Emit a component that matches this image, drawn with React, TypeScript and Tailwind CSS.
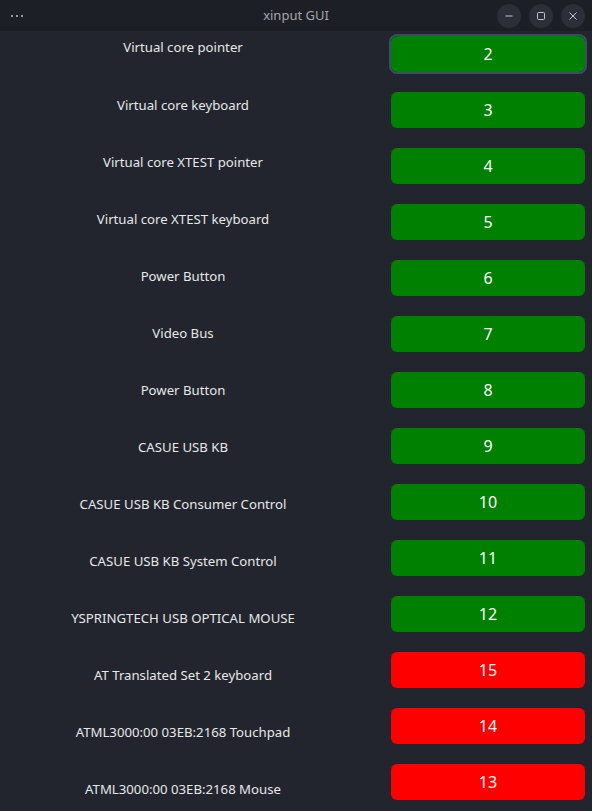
const devices: { name: string; id: number; enabled: boolean }[] = [
  { name: "Virtual core pointer", id: 2, enabled: true },
  { name: "Virtual core keyboard", id: 3, enabled: true },
  { name: "Virtual core XTEST pointer", id: 4, enabled: true },
  { name: "Virtual core XTEST keyboard", id: 5, enabled: true },
  { name: "Power Button", id: 6, enabled: true },
  { name: "Video Bus", id: 7, enabled: true },
  { name: "Power Button", id: 8, enabled: true },
  { name: "CASUE USB KB", id: 9, enabled: true },
  { name: "CASUE USB KB Consumer Control", id: 10, enabled: true },
  { name: "CASUE USB KB System Control", id: 11, enabled: true },
  { name: "YSPRINGTECH USB OPTICAL MOUSE", id: 12, enabled: true },
  { name: "AT Translated Set 2 keyboard", id: 15, enabled: false },
  { name: "ATML3000:00 03EB:2168 Touchpad", id: 14, enabled: false },
  { name: "ATML3000:00 03EB:2168 Mouse", id: 13, enabled: false },
];

function WinButton({ children }: { children: React.ReactNode }) {
  return (
    <div className="w-6 h-6 rounded-full bg-[#2c2f37] flex items-center justify-center text-[#c4c6cc]">
      {children}
    </div>
  );
}

export default function App() {
  return (
    <div
      className="w-[592px] h-[811px] bg-[#22252d] flex flex-col overflow-hidden"
      style={{ fontFamily: '"Noto Sans", "Open Sans", sans-serif' }}
    >
      {/* title bar */}
      <header className="h-[31px] shrink-0 bg-[#1d1f26] flex items-center relative">
        <div className="flex gap-[3px] pl-[11px] pt-[1px]">
          <span className="w-[2px] h-[2px] bg-[#9a9ca2]" />
          <span className="w-[2px] h-[2px] bg-[#9a9ca2]" />
          <span className="w-[2px] h-[2px] bg-[#9a9ca2]" />
        </div>
        <div className="absolute inset-0 flex items-center justify-center text-[13px] text-[#a3a5ab] pointer-events-none">
          xinput GUI
        </div>
        <div className="ml-auto flex gap-2 pr-[7px]">
          <WinButton>
            <svg width="10" height="10" viewBox="0 0 10 10">
              <path d="M1.5 5h7" stroke="currentColor" strokeWidth="1" />
            </svg>
          </WinButton>
          <WinButton>
            <svg width="10" height="10" viewBox="0 0 10 10">
              <rect x="1.5" y="1.5" width="7" height="7" rx="1" fill="none" stroke="currentColor" strokeWidth="1" />
            </svg>
          </WinButton>
          <WinButton>
            <svg width="10" height="10" viewBox="0 0 10 10">
              <path d="M1.5 1.5l7 7M8.5 1.5l-7 7" stroke="currentColor" strokeWidth="1" />
            </svg>
          </WinButton>
        </div>
      </header>

      <main className="flex-1 flex">
        {/* device names */}
        <div className="w-[366px] flex flex-col pt-[7px]">
          {devices.map((d, i) => (
            <div
              key={d.id}
              className={`${i === 0 ? "h-[58px]" : "h-[57px]"} shrink-0 text-center text-[13.2px] leading-[18px] text-[#e6e7ea]`}
            >
              {d.name}
            </div>
          ))}
        </div>

        {/* toggle buttons */}
        <div className="flex flex-col gap-5 pt-[5px] pl-[25px]">
          {devices.map((d, i) => (
            <button
              key={d.id}
              className={`w-[194px] h-9 shrink-0 rounded-[6px] text-white text-[16px] ${
                d.enabled ? "bg-[#008000]" : "bg-[#ff0000]"
              } ${i === 0 ? "outline-2 outline-[#3d4a68]" : ""}`}
            >
              {d.id}
            </button>
          ))}
        </div>
      </main>

      <div className="h-[7px] shrink-0 bg-[#1b1e25]" />
    </div>
  );
}
